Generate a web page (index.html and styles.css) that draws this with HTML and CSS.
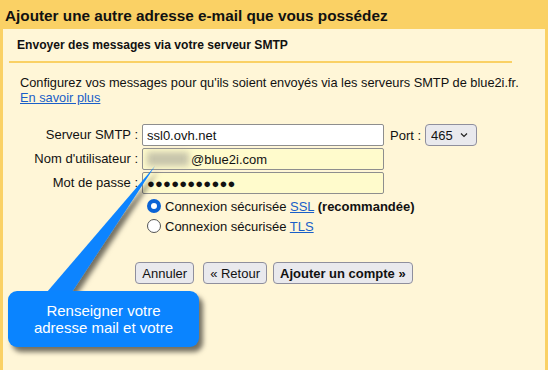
FILE: index.html
```html
<!DOCTYPE html>
<html lang="fr">
<head>
<meta charset="utf-8">
<link rel="stylesheet" href="styles.css">
</head>
<body>
<div class="page">
  <h1 class="title">Ajouter une autre adresse e-mail que vous possédez</h1>
  <div class="panel">
    <h2 class="subtitle">Envoyer des messages via votre serveur SMTP</h2>
    <div class="sep"></div>
    <p class="desc">Configurez vos messages pour qu'ils soient envoyés via les serveurs SMTP de blue2i.fr.<br><a href="#">En savoir plus</a></p>

    <div class="form">
      <label class="lbl">Serveur SMTP :</label>
      <input class="field" type="text" value="ssl0.ovh.net">
      <div class="port">
        <span class="port-lbl">Port :</span>
        <span class="select-wrap">
          <select class="select"><option>465</option><option>587</option></select>
          <svg class="chev" width="8" height="6" viewBox="0 0 8 6"><path d="M1 1.5 L4 4.5 L7 1.5" fill="none" stroke="#222" stroke-width="1.2"/></svg>
        </span>
      </div>

      <label class="lbl">Nom d'utilisateur :</label>
      <span class="field-wrap">
        <input class="field auto user" type="text" value="@blue2i.com">
        <span class="blur"></span>
      </span>
      <span></span>

      <label class="lbl">Mot de passe :</label>
      <input class="field auto pass" type="text" value="●●●●●●●●●●●">
      <span></span>
    </div>

    <div class="radios">
      <label class="radio-row"><input type="radio" name="sec" class="radio" checked><span>Connexion sécurisée <a href="#">SSL</a> <b>(recommandée)</b></span></label>
      <label class="radio-row"><input type="radio" name="sec" class="radio"><span>Connexion sécurisée <a href="#">TLS</a></span></label>
    </div>

    <div class="buttons">
      <button class="btn">Annuler</button>
      <button class="btn back">« Retour</button>
      <button class="btn primary">Ajouter un compte »</button>
    </div>
  </div>

  <svg class="tail" width="548" height="370" viewBox="0 0 548 370">
    <defs>
      <filter id="sh" x="-20%" y="-20%" width="160%" height="160%">
        <feDropShadow dx="4" dy="4" stdDeviation="2.5" flood-color="#000" flood-opacity="0.55"/>
      </filter>
    </defs>
    <polygon points="47,292 72,292 155,166" fill="#0a84ff" filter="url(#sh)"/>
  </svg>
  <div class="callout">Renseigner votre<br>adresse mail et votre</div>
</div>
</body>
</html>
```
FILE: styles.css
```css
* { box-sizing: border-box; }
html, body { margin: 0; padding: 0; }
body {
  background: #fad165;
  font-family: "Liberation Sans", Arial, sans-serif;
  font-size: 13px;
  color: #111;
  width: 548px;
  height: 370px;
  overflow: hidden;
}
.page {
  position: relative;
  height: 370px;
  display: flex;
  flex-direction: column;
}
.title {
  margin: 0;
  height: 29px;
  padding: 6px 0 0 5px;
  font-size: 15.3px;
  line-height: 20px;
  font-weight: bold;
  color: #111;
}
.panel {
  flex: 1;
  margin: 0 3px;
  background: #fff6d7;
}
.subtitle {
  margin: 0;
  padding: 8px 0 0 14px;
  font-size: 12.1px;
  line-height: 16px;
  font-weight: bold;
}
.sep {
  height: 2px;
  background: #fad165;
  margin: 8px 33px 0 6px;
}
.desc {
  margin: 12px 0 0 17px;
  line-height: 15px;
  font-size: 12.8px;
}
a { color: #1a5fc8; text-decoration: underline; }

.form {
  margin-top: 19px;
  display: grid;
  grid-template-columns: 135px 242px auto;
  grid-auto-rows: 22px;
  column-gap: 4px;
  row-gap: 2px;
  align-items: center;
}
.lbl {
  text-align: right;
  line-height: 15px;
  padding-bottom: 1px;
}
.field {
  width: 242px;
  height: 22px;
  border: 1px solid #8e8e8e;
  border-radius: 2px;
  background: #fff;
  padding: 0 4px;
  font-family: "Liberation Sans", Arial, sans-serif;
  font-size: 13px;
  color: #111;
  outline: none;
}
.field.auto { background: #fffbcc; }
.field.pass { letter-spacing: 0.2px; padding-left: 4px; }
.field-wrap { position: relative; display: block; height: 22px; }
.field.user { padding-left: 48px; }
.blur {
  position: absolute;
  left: 5px;
  top: 4px;
  width: 42px;
  height: 14px;
  background: #b9b7a3;
  filter: blur(3px);
  opacity: 0.8;
}
.port {
  display: flex;
  align-items: center;
  gap: 4px;
  margin-left: 2px;
}
.select-wrap { position: relative; display: inline-block; }
.select {
  appearance: none;
  -webkit-appearance: none;
  width: 52px;
  height: 22px;
  border: 1px solid #8f8f9d;
  border-radius: 4px;
  background: #e9e9ed;
  font-family: "Liberation Sans", Arial, sans-serif;
  font-size: 13px;
  color: #111;
  padding: 0 0 0 5px;
  display: block;
}
.chev {
  position: absolute;
  right: 9px;
  top: 8px;
  pointer-events: none;
}

.radios {
  margin: 2px 0 0 144px;
  display: flex;
  flex-direction: column;
}
.radio-row {
  height: 20px;
  display: flex;
  align-items: center;
}
.radio {
  appearance: none;
  -webkit-appearance: none;
  width: 14px;
  height: 14px;
  margin: 0 4px 0 0;
  border-radius: 50%;
  border: 1px solid #555;
  background: #fff;
  flex: none;
}
.radio:checked {
  border: 4px solid #0a63d6;
}

.buttons {
  margin-top: 26px;
  display: flex;
  justify-content: center;
  gap: 6px;
}
.btn {
  font-family: "Liberation Sans", Arial, sans-serif;
  font-size: 13px;
  color: #111;
  height: 22px;
  padding: 0 6px;
  border: 1px solid #8f8f9d;
  border-radius: 4px;
  background: #e9e9ed;
}
.btn.back { margin-left: 3px; }
.btn.primary { font-weight: bold; }

.tail {
  position: absolute;
  left: 0;
  top: 0;
  pointer-events: none;
}
.callout {
  position: absolute;
  left: 8px;
  top: 291px;
  width: 191px;
  height: 56px;
  border-radius: 9px;
  background: #0a84ff;
  box-shadow: 4px 5px 5px rgba(0,0,0,0.55);
  color: #fff;
  font-size: 15px;
  line-height: 17px;
  text-align: center;
  display: flex;
  align-items: center;
  justify-content: center;
}
```
